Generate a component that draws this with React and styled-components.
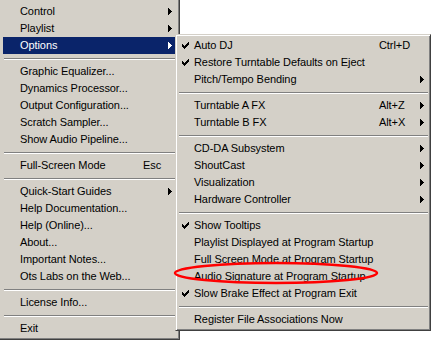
import React from "react";
import styled, { createGlobalStyle } from "styled-components";

const GlobalStyle = createGlobalStyle`
  html, body { margin: 0; padding: 0; background: #ffffff; }
  body { font-family: "Liberation Sans", Arial, sans-serif; }
`;

const Stage = styled.div`
  position: relative;
  width: 433px;
  height: 340px;
  overflow: hidden;
  background: #ffffff;
`;

const MainMenu = styled.div`
  box-sizing: border-box;
  width: 180px;
  height: 340px;
  display: flex;
  flex-direction: column;
  padding: 3px 3px 1px 3px;
  background: #d4d0c8;
  border-right: 1px solid #404040;
  border-bottom: 1px solid #404040;
  box-shadow: inset -1px -1px 0 #808080;
`;

const SubMenu = styled.div`
  position: absolute;
  left: 175px;
  top: 34px;
  box-sizing: border-box;
  width: 256px;
  display: flex;
  flex-direction: column;
  padding: 2px;
  background: #d4d0c8;
  border: 1px solid;
  border-color: #d4d0c8 #404040 #404040 #d4d0c8;
  box-shadow: inset 1px 1px 0 #ffffff, inset -1px -1px 0 #808080;
`;

const Item = styled.div`
  display: flex;
  align-items: center;
  height: 17px;
  font-size: 11px;
  line-height: 17px;
  letter-spacing: -0.08px;
  white-space: nowrap;
  color: ${(p) => (p.$active ? "#ffffff" : "#000000")};
  background: ${(p) => (p.$active ? "#0a246a" : "transparent")};
`;

const Gutter = styled.span`
  width: ${(p) => p.$w}px;
  height: 17px;
  flex: none;
  display: flex;
  align-items: center;
  padding-left: 4px;
  box-sizing: border-box;
`;

const Label = styled.span`
  flex: 1;
`;

const Shortcut = styled.span`
  flex: none;
  width: ${(p) => p.$w}px;
`;

const ArrowCell = styled.span`
  flex: none;
  width: 8px;
  height: 17px;
  display: flex;
  align-items: center;
`;

const Separator = styled.div`
  height: 2px;
  margin: 4px 0 3px 1px;
  border-top: 1px solid #808080;
  border-bottom: 1px solid #ffffff;
  box-sizing: border-box;
`;

const Ring = styled.svg`
  position: absolute;
  left: 172px;
  top: 260px;
  pointer-events: none;
`;

const Check = ({ color }) => (
  <svg width="7" height="7" viewBox="0 0 7 7" shapeRendering="crispEdges">
    <g fill={color}>
      <rect x="6" y="0" width="1" height="1" />
      <rect x="5" y="1" width="2" height="1" />
      <rect x="0" y="2" width="1" height="1" />
      <rect x="4" y="2" width="3" height="1" />
      <rect x="0" y="3" width="2" height="1" />
      <rect x="3" y="3" width="3" height="1" />
      <rect x="0" y="4" width="5" height="1" />
      <rect x="1" y="5" width="3" height="1" />
      <rect x="2" y="6" width="1" height="1" />
    </g>
  </svg>
);

const Arrow = ({ color }) => (
  <svg width="4" height="7" viewBox="0 0 4 7" shapeRendering="crispEdges">
    <g fill={color}>
      <rect x="0" y="0" width="1" height="7" />
      <rect x="1" y="1" width="1" height="5" />
      <rect x="2" y="2" width="1" height="3" />
      <rect x="3" y="3" width="1" height="1" />
    </g>
  </svg>
);

const mainItems = [
  { label: "Control", arrow: true },
  { label: "Playlist", arrow: true },
  { label: "Options", arrow: true, active: true },
  "sep",
  { label: "Graphic Equalizer..." },
  { label: "Dynamics Processor..." },
  { label: "Output Configuration..." },
  { label: "Scratch Sampler..." },
  { label: "Show Audio Pipeline..." },
  "sep",
  { label: "Full-Screen Mode", shortcut: "Esc" },
  "sep",
  { label: "Quick-Start Guides", arrow: true },
  { label: "Help Documentation..." },
  { label: "Help (Online)..." },
  { label: "About..." },
  { label: "Important Notes..." },
  { label: "Ots Labs on the Web..." },
  "sep",
  { label: "License Info..." },
  "sep",
  { label: "Exit" },
];

const subItems = [
  { label: "Auto DJ", check: true, shortcut: "Ctrl+D" },
  { label: "Restore Turntable Defaults on Eject", check: true },
  { label: "Pitch/Tempo Bending", arrow: true },
  "sep",
  { label: "Turntable A FX", shortcut: "Alt+Z", arrow: true },
  { label: "Turntable B FX", shortcut: "Alt+X", arrow: true },
  "sep",
  { label: "CD-DA Subsystem", arrow: true },
  { label: "ShoutCast", arrow: true },
  { label: "Visualization", arrow: true },
  { label: "Hardware Controller", arrow: true },
  "sep",
  { label: "Show Tooltips", check: true },
  { label: "Playlist Displayed at Program Startup" },
  { label: "Full Screen Mode at Program Startup" },
  { label: "Audio Signature at Program Startup" },
  { label: "Slow Brake Effect at Program Exit", check: true },
  "sep",
  { label: "Register File Associations Now" },
];

const MenuRows = ({ items, gutter, shortcutWidth }) =>
  items.map((it, i) => {
    if (it === "sep") return <Separator key={i} />;
    const color = it.active ? "#ffffff" : "#000000";
    return (
      <Item key={i} $active={it.active}>
        <Gutter $w={gutter}>{it.check && <Check color={color} />}</Gutter>
        <Label>{it.label}</Label>
        <Shortcut $w={shortcutWidth}>{it.shortcut || ""}</Shortcut>
        <ArrowCell>{it.arrow && <Arrow color={color} />}</ArrowCell>
      </Item>
    );
  });

export default function App() {
  return (
    <>
      <GlobalStyle />
      <Stage>
        <MainMenu>
          <MenuRows items={mainItems} gutter={17} shortcutWidth={25} />
        </MainMenu>
        <SubMenu>
          <MenuRows items={subItems} gutter={16} shortcutWidth={41} />
        </SubMenu>
        <Ring width="212" height="28" viewBox="0 0 212 28">
          <ellipse cx="104" cy="13" rx="101" ry="10" fill="none" stroke="#ff0000" strokeWidth="2.5" />
        </Ring>
      </Stage>
    </>
  );
}
